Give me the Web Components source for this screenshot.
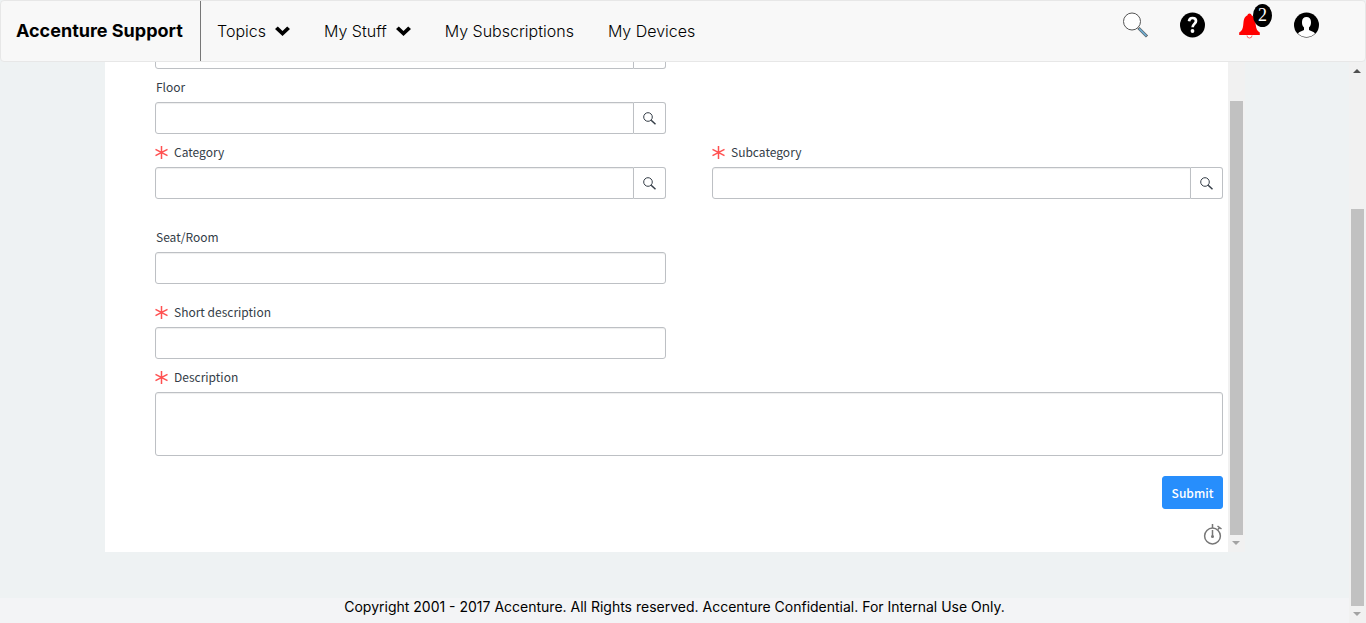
<!DOCTYPE html>
<html lang="en">
<head>
<meta charset="utf-8">
<title>Accenture Support</title>
<style>
  html, body { margin: 0; height: 100%; }
  body { font-family: Inter, "Liberation Sans", sans-serif; color: #000; background: #eef2f3; overflow: hidden; }
</style>
</head>
<body>
<support-app></support-app>

<template id="app-tpl">
  <style>
    :host { display: flex; flex-direction: column; height: 100vh; }
    .below { flex: 1; display: flex; min-height: 0; }
    .content { flex: 1; min-width: 0; display: flex; flex-direction: column; justify-content: space-between; }
    .panel { display: flex; margin: 0 104px 0 105px; background: #fff; overflow: hidden; }
    request-form { flex: 1; min-width: 0; }
    footer { height: 25px; line-height: 18px; background: #f3f4f6; font-size: 14px; font-weight: 400; text-align: center; }
  </style>
  <site-header></site-header>
  <div class="below">
    <div class="content">
      <main class="panel">
        <request-form></request-form>
        <scroll-rail style="--before: 39px; --after: 17px"></scroll-rail>
      </main>
      <footer>Copyright 2001 - 2017 Accenture. All Rights reserved. Accenture Confidential. For Internal Use Only.</footer>
    </div>
    <scroll-rail up style="--before: 147px; --after: 17px"></scroll-rail>
  </div>
</template>

<template id="header-tpl">
  <style>
    :host { display: flex; box-sizing: border-box; height: 62px; background: #f8f8f8; border: 1px solid #e7e7e7; border-radius: 4px; line-height: 20px; }
    a { color: #000; text-decoration: none; }
    .brand { display: flex; align-items: center; box-sizing: border-box; width: 200px; padding-left: 15px; border-right: 1px solid #777; font-size: 18px; font-weight: 700; white-space: nowrap; }
    nav { display: flex; flex: 1; gap: 2px; }
    .tools { display: flex; gap: 32px; padding: 11px 46px 0 0; }
    button { position: relative; display: block; width: 25px; height: 26px; padding: 0; border: 0; background: none; }
    svg { display: block; width: 100%; height: 100%; overflow: visible; }
    .badge { position: absolute; left: 16px; top: -8px; width: 19px; height: 23px; border-radius: 50%; background: #000; color: #fff; font: 18px/22px "Liberation Serif", serif; text-align: center; }
  </style>
  <a class="brand" href="#">Accenture Support</a>
  <nav>
    <nav-item menu>Topics</nav-item>
    <nav-item menu>My Stuff</nav-item>
    <nav-item>My Subscriptions</nav-item>
    <nav-item>My Devices</nav-item>
  </nav>
  <div class="tools">
    <button aria-label="Search"><svg viewBox="0 0 25 26"><circle cx="9" cy="9.500" r="8.500" fill="#fff" stroke="#555" stroke-width="1"/><path d="M15.500 16l8.500 8.500" stroke="#555" stroke-width="3"/><path d="M16 16.500l7.500 7.500" stroke="#6fa9cb" stroke-width="1.800"/></svg></button>
    <button aria-label="Help"><svg viewBox="0 0 25 26"><circle cx="12.500" cy="13" r="12.500"/><path d="M9 9.200C9.300 7 10.500 6 12.500 6c2.200 0 3.500 1.200 3.500 3 0 2.800-3.400 3-3.400 6.200" fill="none" stroke="#fff" stroke-width="2.700"/><circle cx="12.500" cy="19" r="1.900" fill="#fff"/></svg></button>
    <button aria-label="Notifications"><svg viewBox="0 0 25 26"><path d="M10 23.500a2.500 2.500 0 0 0 5 0" fill="#fff" stroke="#f66"/><path d="M12.500 1.500c1.200 0 1.800.8 2 1.700 3.900 1.600 3.800 5.700 4.300 10 .4 4 1.400 5.800 4 7.300V23H2.200v-2.500c2.600-1.500 3.600-3.300 4-7.300.5-4.300.4-8.400 4.300-10 .2-.9.800-1.700 2-1.700z" fill="red"/></svg><span class="badge">2</span></button>
    <button aria-label="Profile"><svg viewBox="0 0 25 26"><circle cx="12.500" cy="13" r="12.500"/><path d="M4 21.500c1-2 4.200-2.500 6-3.500v-2.500C8.300 14 8 12 8 10c0-3.300 1.800-5 4.500-5S17 6.700 17 10c0 2-.3 4-2 5.500V18c1.800 1 5 1.500 6 3.500a12 12 0 0 1-17 0z" fill="#fff"/></svg></button>
  </div>
</template>

<template id="nav-tpl">
  <style>
    :host { display: flex; }
    a { display: flex; align-items: center; gap: 9px; padding: 0 16px; color: #000; text-decoration: none; font-size: 16px; font-weight: 300; white-space: nowrap; }
    svg { display: none; width: 15px; height: 10px; }
    :host([menu]) svg { display: block; }
  </style>
  <a href="#"><span><slot></slot></span><svg viewBox="0 0 15 10"><path d="M0 3L2.800.5 7.500 5 12.200.5 15 3 7.500 10z"/></svg></a>
</template>

<template id="rail-tpl">
  <style>
    :host { display: flex; flex-direction: column; position: relative; width: 17px; background: #f1f1f1; }
    .thumb { flex: 1; margin: var(--before) 2px var(--after); background: #c1c1c1; }
    .arrow { position: absolute; left: 4px; border: 4px solid transparent; border-top-width: 0; border-bottom-width: 0; }
    .arrow.up { display: none; top: 7px; border-bottom: 4px solid #505050; }
    .arrow.down { bottom: 7px; border-top: 4px solid #a3a3a3; }
    :host([up]) .arrow.up { display: block; }
  </style>
  <div class="arrow up"></div><div class="thumb"></div><div class="arrow down"></div>
</template>

<template id="field-tpl">
  <style>
    :host { display: block; padding-top: 8px; }
    label { display: flex; align-items: center; gap: 6px; height: 20px; margin-bottom: 5px; padding-left: 1px; font-size: 12px; line-height: 20px; color: #343d47; white-space: nowrap; }
    label svg { display: none; width: 13px; height: 14px; flex: none; }
    :host([required]) label { padding-left: 0; }
    :host([required]) label svg { display: block; }
    :host([unlabelled]) label { display: none; }
    .box { display: flex; }
    input, textarea { display: block; flex: 1; min-width: 0; box-sizing: border-box; height: 32px; margin: 0; padding: 0 12px; border: 1px solid #bdc0c4; border-radius: 3px; background: #fff; box-shadow: inset 0 1px 1px #eee; font: 12px "Noto Sans CJK SC", sans-serif; resize: none; outline: 0; }
    textarea { height: 64px; }
    button { display: none; box-sizing: border-box; width: 32px; height: 32px; padding: 0 0 0 9px; border: 1px solid #bdc0c4; border-left: 0; border-radius: 0 3px 3px 0; background: #fff; }
    button svg { display: block; width: 13px; height: 13px; }
    :host([lookup]) button { display: block; }
    :host([lookup]) input { border-radius: 3px 0 0 3px; }
  </style>
  <label for="control"><svg viewBox="0 0 13 14"><path d="M6.500 1v13M.5 4.300l12 6.400M12.500 4.300l-12 6.400" stroke="#ff5050" stroke-width="1.500"/></svg><span><slot></slot></span></label>
  <div class="box"><button type="button" aria-label="Look up"><svg viewBox="0 0 13 13" fill="none" stroke="#343d47"><circle cx="5" cy="5" r="4.300" stroke-width="1"/><path d="M8.200 8.200l4.300 4" stroke-width="1.500"/></svg></button></div>
</template>

<template id="form-tpl">
  <style>
    :host { display: block; overflow: hidden; font-family: "Noto Sans CJK SC", sans-serif; }
    form { display: grid; grid-template-columns: 1fr 1fr; column-gap: 46px; padding: 0 5px 6px 50px; margin-top: -33px; }
    .left { grid-column: 1; }
    .wide { grid-column: 1 / -1; }
    .seat { margin-top: 20px; }
    .short { margin-top: 10px; }
    .actions { grid-column: 1 / -1; display: flex; flex-direction: column; align-items: flex-end; gap: 15px; padding-top: 20px; }
    .submit { width: 61px; height: 33px; padding: 0; border: 1px solid #278efc; border-radius: 3px; background: #278efc; color: #fff; font: 500 12px/20px "Noto Sans CJK SC", sans-serif; }
    .timer { width: 20px; height: 22px; padding: 0; border: 0; background: none; }
    .timer svg { display: block; }
  </style>
  <form>
    <form-field class="left" lookup unlabelled></form-field>
    <form-field class="left" lookup>Floor</form-field>
    <form-field class="left" lookup required>Category</form-field>
    <form-field lookup required>Subcategory</form-field>
    <form-field class="left seat">Seat/Room</form-field>
    <form-field class="left short" required>Short description</form-field>
    <form-field class="wide" required multiline>Description</form-field>
    <div class="actions">
      <button class="submit" type="button">Submit</button>
      <button class="timer" type="button" aria-label="Response time"><svg width="20" height="22" viewBox="0 0 20 22" fill="none" stroke="#777" stroke-width="1.500"><circle cx="9.500" cy="12" r="7.900"/><path d="M9.500 4V0M9.500 6v7M15 5.500l1.500-2M14.500 2l4 3"/><circle cx="9.500" cy="12.500" r="1.500" fill="#777" stroke="none"/></svg></button>
    </div>
  </form>
</template>

<script>
  class TemplateElement extends HTMLElement {
    constructor() {
      super();
      this.attachShadow({ mode: 'open' }).append(document.getElementById(this.constructor.template).content.cloneNode(true));
    }
  }
  class FormField extends TemplateElement {
    static template = 'field-tpl';
    connectedCallback() {
      if (this.shadowRoot.getElementById('control')) return;
      const control = document.createElement(this.hasAttribute('multiline') ? 'textarea' : 'input');
      control.id = 'control';
      control.required = this.hasAttribute('required');
      if (this.hasAttribute('unlabelled')) control.setAttribute('aria-label', 'Location');
      this.shadowRoot.querySelector('.box').prepend(control);
    }
  }
  customElements.define('scroll-rail', class extends TemplateElement { static template = 'rail-tpl'; });
  customElements.define('nav-item', class extends TemplateElement { static template = 'nav-tpl'; });
  customElements.define('form-field', FormField);
  customElements.define('request-form', class extends TemplateElement { static template = 'form-tpl'; });
  customElements.define('site-header', class extends TemplateElement { static template = 'header-tpl'; });
  customElements.define('support-app', class extends TemplateElement { static template = 'app-tpl'; });
</script>
</body>
</html>
